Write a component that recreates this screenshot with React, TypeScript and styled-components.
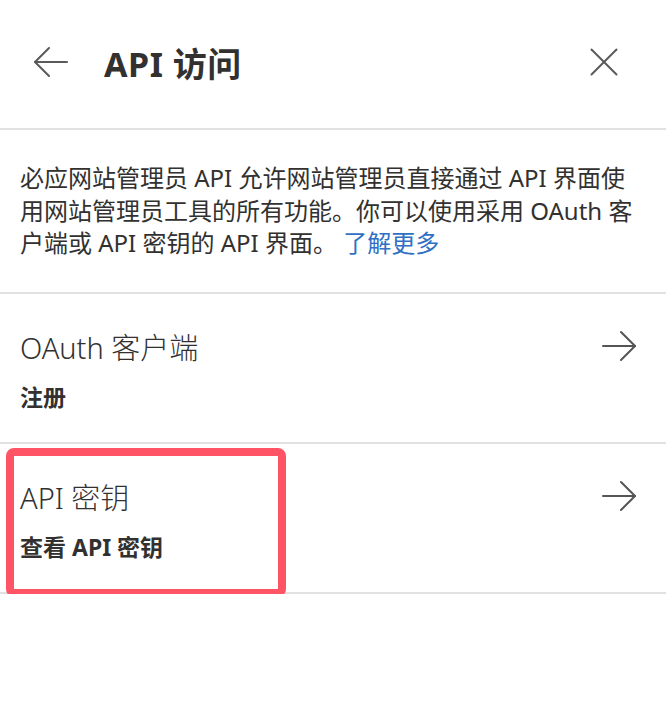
import React from "react";
import styled, { createGlobalStyle } from "styled-components";

const Global = createGlobalStyle`
  html, body { margin: 0; padding: 0; background: #ffffff; }
  body { font-family: "Noto Sans", "Noto Sans CJK SC", sans-serif; color: #323130; }
`;

const Page = styled.div`
  width: 666px;
  display: flex;
  flex-direction: column;
`;

const Header = styled.header`
  height: 130px;
  box-sizing: border-box;
  padding: 0 48px 4px 34px;
  display: flex;
  align-items: center;
  border-bottom: 2px solid #e1e1e1;
`;

const IconButton = styled.button`
  border: none;
  background: none;
  padding: 0;
  display: flex;
  align-items: center;
  justify-content: center;
  cursor: pointer;
  color: #5a5a5a;
`;

const CloseButton = styled(IconButton)`
  margin-left: auto;
`;

const Title = styled.h1`
  margin: 0 0 0 36px;
  font-size: 34px;
  font-weight: 700;
  letter-spacing: 0.5px;
  color: #323130;
`;

const Description = styled.p`
  margin: 0;
  height: 164px;
  box-sizing: border-box;
  padding: 32px 30px 0 20px;
  font-size: 24px;
  line-height: 32.5px;
  color: #323130;
  border-bottom: 2px solid #e1e1e1;
`;

const Link = styled.a`
  color: #2f6fc4;
  text-decoration: none;
`;

const Row = styled.div`
  position: relative;
  height: 150px;
  box-sizing: border-box;
  padding: 31px 30px 0 20px;
  border-bottom: 2px solid #e1e1e1;
  display: flex;
  flex-direction: column;
  gap: 15px;
`;

const RowHead = styled.div`
  display: flex;
  align-items: center;
  justify-content: space-between;
  height: 42px;
`;

const RowTitle = styled.div`
  font-size: 29px;
  font-weight: 300;
  color: #323130;
`;

const RowSub = styled.div`
  font-size: 23px;
  line-height: 30px;
  font-weight: 700;
  color: #323130;
`;

const Highlight = styled.div`
  position: absolute;
  left: 6px;
  top: 4px;
  width: 280px;
  height: 149px;
  box-sizing: border-box;
  border: 8px solid #ff5466;
  border-radius: 8px;
  pointer-events: none;
`;

const Arrow = ({ dir }: { dir: "left" | "right" }) => (
  <svg width="34" height="32" viewBox="0 0 34 32" fill="none" stroke="currentColor" strokeWidth="2" strokeLinecap="round" strokeLinejoin="round">
    {dir === "right" ? (
      <>
        <line x1="1" y1="16" x2="33" y2="16" />
        <polyline points="19,2 33,16 19,30" />
      </>
    ) : (
      <>
        <line x1="33" y1="16" x2="1" y2="16" />
        <polyline points="15,2 1,16 15,30" />
      </>
    )}
  </svg>
);

const Close = () => (
  <svg width="28" height="28" viewBox="0 0 28 28" fill="none" stroke="currentColor" strokeWidth="2" strokeLinecap="round">
    <line x1="1.5" y1="1.5" x2="26.5" y2="26.5" />
    <line x1="26.5" y1="1.5" x2="1.5" y2="26.5" />
  </svg>
);

const ArrowBox = styled.span`
  color: #555555;
  display: flex;
`;

const rows = [
  { title: "OAuth 客户端", sub: "注册", highlight: false },
  { title: "API 密钥", sub: "查看 API 密钥", highlight: true },
];

export default function App() {
  return (
    <Page>
      <Global />
      <Header>
        <IconButton aria-label="返回">
          <Arrow dir="left" />
        </IconButton>
        <Title>API 访问</Title>
        <CloseButton aria-label="关闭">
          <Close />
        </CloseButton>
      </Header>
      <Description>
        必应网站管理员 API 允许网站管理员直接通过 API 界面使用网站管理员工具的所有功能。你可以使用采用 OAuth 客户端或 API 密钥的 API 界面。{" "}
        <Link href="#">了解更多</Link>
      </Description>
      {rows.map((r) => (
        <Row key={r.title}>
          <RowHead>
            <RowTitle>{r.title}</RowTitle>
            <ArrowBox>
              <Arrow dir="right" />
            </ArrowBox>
          </RowHead>
          <RowSub>{r.sub}</RowSub>
          {r.highlight && <Highlight />}
        </Row>
      ))}
    </Page>
  );
}
